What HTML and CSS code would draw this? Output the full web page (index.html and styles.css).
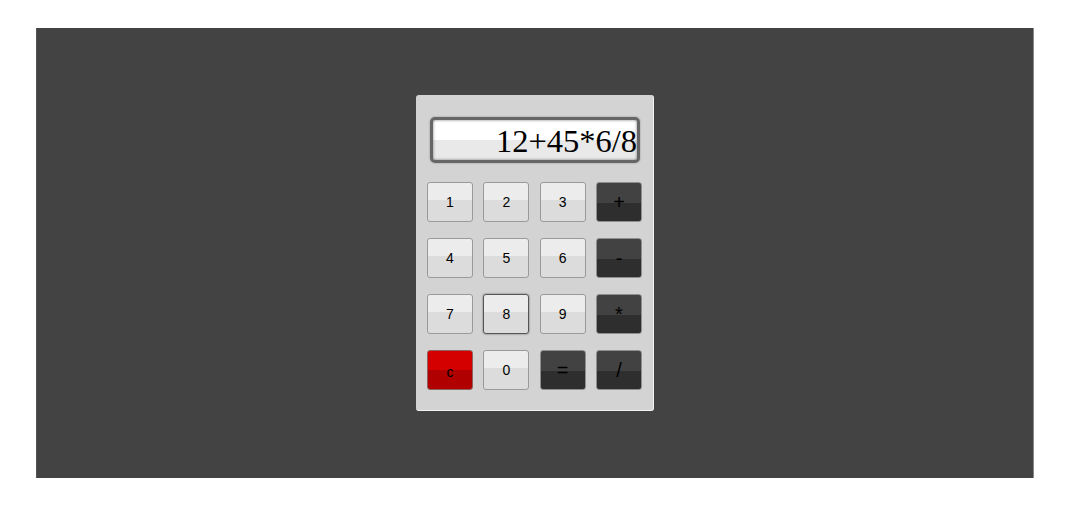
FILE: index.html
```html
<!DOCTYPE html>
<html>
<head>
<meta charset="utf-8">
<link rel="stylesheet" href="styles.css">
</head>
<body>
<div class="stage">
  <div class="calc">
    <div class="screen"><span class="screen-text">12+45*6/8</span></div>
    <div class="keys">
      <button class="key">1</button>
      <button class="key">2</button>
      <button class="key">3</button>
      <button class="key op">+</button>
      <button class="key">4</button>
      <button class="key">5</button>
      <button class="key">6</button>
      <button class="key op">-</button>
      <button class="key">7</button>
      <button class="key focus">8</button>
      <button class="key">9</button>
      <button class="key op">*</button>
      <button class="key clear">c</button>
      <button class="key">0</button>
      <button class="key op">=</button>
      <button class="key op">/</button>
    </div>
  </div>
</div>
</body>
</html>
```
FILE: styles.css
```css
html, body {
  margin: 0;
  padding: 0;
  background: #ffffff;
}
body {
  padding: 28px 44px 32px 36px;
}
.stage {
  width: 998px;
  height: 450px;
  background: #434343;
  border-left: 1px solid #555;
  border-right: 1px solid #8a8a8a;
  box-sizing: border-box;
  display: flex;
  justify-content: center;
  align-items: flex-start;
  padding-top: 67px;
}
.calc {
  width: 238px;
  height: 316px;
  box-sizing: border-box;
  background: #d3d3d3;
  border-radius: 3px;
  border-right: 1px solid #f2f2f2;
  border-bottom: 1px solid #f2f2f2;
  padding: 22px 12px 0 11px;
}
.screen {
  margin-left: 3px;
  width: 210px;
  height: 46px;
  box-sizing: border-box;
  border: 3px solid #666;
  border-radius: 5px;
  background: linear-gradient(#ffffff 0%, #ffffff 50%, #e9e9e9 50%, #e9e9e9 100%);
  box-shadow: inset 0 0 3px rgba(0,0,0,0.5), 0 0 2px rgba(0,0,0,0.35);
  display: flex;
  align-items: center;
  justify-content: flex-end;
  overflow: hidden;
  padding-right: 0;
}
.screen-text {
  font-family: "Liberation Serif", "Times New Roman", serif;
  font-size: 32.5px;
  line-height: 1;
  color: #000;
  white-space: nowrap;
  padding-top: 2px;
}
.keys {
  margin-top: 19px;
  display: grid;
  grid-template-columns: repeat(4, 46px);
  grid-auto-rows: 40px;
  column-gap: 10.33px;
  row-gap: 16px;
}
.key {
  margin: 0;
  padding: 0;
  border: 1px solid #9a9a9a;
  border-radius: 3px;
  background: linear-gradient(#ececec 0%, #ececec 46%, #dcdcdc 46%, #dcdcdc 100%);
  font-family: "Liberation Sans", Arial, sans-serif;
  font-size: 14px;
  color: #000;
  display: flex;
  align-items: center;
  justify-content: center;
}
.key.focus {
  border: 1px solid #555;
  box-shadow: 0 0 2px rgba(0,0,0,0.6);
}
.key.op {
  background: linear-gradient(#424242 0%, #424242 52%, #2e2e2e 52%, #2e2e2e 100%);
  border-color: #8e8e8e;
  font-size: 20px;
  padding-top: 1px;
}
.key.clear {
  background: linear-gradient(#d40000 0%, #d40000 50%, #b00000 50%, #b00000 100%);
  border-color: #8e6060;
  padding-top: 4px;
}
```
